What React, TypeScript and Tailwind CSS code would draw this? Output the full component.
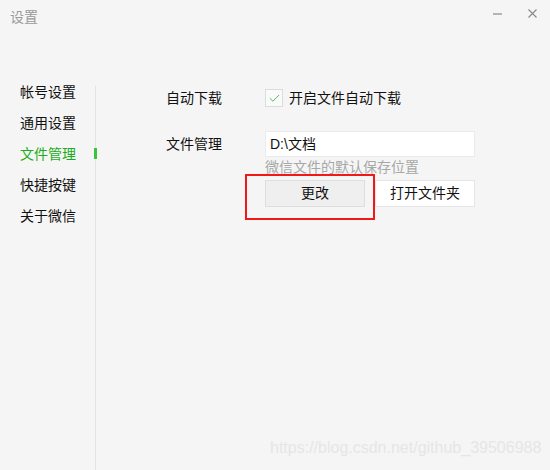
import { Check } from "lucide-react"

const menu = ["帐号设置", "通用设置", "文件管理", "快捷按键", "关于微信"]

export default function App() {
    const active = "文件管理"

    return (
        <div
            className="relative w-[550px] h-[470px] overflow-hidden bg-[#f5f5f5] text-[14px] text-[#111]"
            style={{ fontFamily: '"Liberation Sans", "Noto Sans CJK SC", sans-serif' }}
        >
            {/* title bar */}
            <div className="flex h-[86px] items-start justify-between">
                <div className="pl-[10px] pt-[8px] text-[14px] leading-[18px] text-[#9a9a9a]">设置</div>
                <div className="flex items-center gap-[26px] pr-[13px] pt-[9px]">
                    <div className="w-[9px] h-[2px] bg-[#b4b4b4]" />
                    <svg width="9" height="9" viewBox="0 0 9 9" className="text-[#888]">
                        <path d="M0.5 0.5 L8.5 8.5 M8.5 0.5 L0.5 8.5" stroke="currentColor" strokeWidth="1.1" />
                    </svg>
                </div>
            </div>

            <div className="flex">
                {/* sidebar */}
                <div className="w-[96px] h-[384px] border-r border-[#e3e3e3] flex flex-col gap-[17px] pl-[20px]">
                    {menu.map((item) => (
                        <div
                            key={item}
                            className={
                                "relative h-[14px] leading-[13px] " +
                                (item === active ? "text-[#1aad19]" : "text-[#111]")
                            }
                        >
                            {item}
                            {item === active && (
                                <div className="absolute right-[-2px] top-0 w-[3px] h-[11px] bg-[#3ac43a]" />
                            )}
                        </div>
                    ))}
                </div>

                {/* content */}
                <div className="flex flex-col pl-[70px] pt-[3px]">
                    <div className="flex items-center h-[18px]">
                        <div className="w-[99px]">自动下载</div>
                        <div className="w-[18px] h-[18px] border border-[#dcdcdc] bg-[#fafafa] flex items-center justify-center">
                            <Check className="w-[13px] h-[13px] text-[#36b436]" strokeWidth={1.6} />
                        </div>
                        <div className="ml-[6px]">开启文件自动下载</div>
                    </div>

                    <div className="flex items-center mt-[24px]">
                        <div className="w-[99px]">文件管理</div>
                        <div className="w-[210px] h-[26px] bg-white border border-[#ebebeb] pl-[4px] leading-[24px]">
                            D:\文档
                        </div>
                    </div>

                    <div className="ml-[99px] flex flex-col">
                        <div className="h-[20px] leading-[20px] text-[#a8a8a8]">微信文件的默认保存位置</div>
                        <div className="relative flex gap-[10px] mt-[3px]">
                            <button className="w-[100px] h-[27px] bg-[#efefef] border border-[#dedede] text-[#111]">
                                更改
                            </button>
                            <button className="w-[100px] h-[27px] bg-white border border-[#e6e6e6] text-[#111]">
                                打开文件夹
                            </button>
                            <div className="absolute left-[-20px] top-[-6px] w-[130px] h-[46px] border-2 border-[#f01818]" />
                        </div>
                    </div>
                </div>
            </div>

            {/* watermark */}
            <div className="absolute left-[270px] top-[438px] text-[16px] leading-[19px] text-[#e6e6e6]">
                https://blog.csdn.net/github_39506988
            </div>
        </div>
    )
}
